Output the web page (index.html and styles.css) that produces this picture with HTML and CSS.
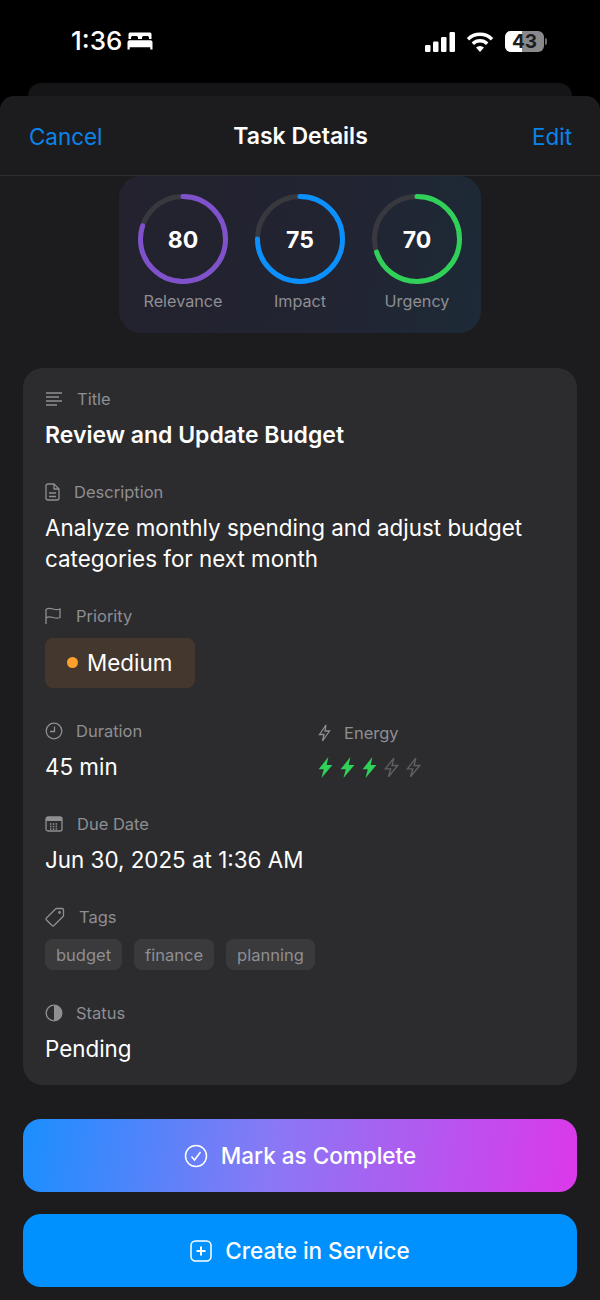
FILE: index.html
```html
<!DOCTYPE html>
<html lang="en">
<head>
  <meta charset="UTF-8" />
  <meta name="viewport" content="width=device-width, initial-scale=1.0"/>
  <title>Task Details</title>
  <link rel="stylesheet" href="styles.css">
</head>
<body>
  <div class="status-bar">
    <div class="status-left">
      <span class="clock">1:36</span>
      <svg width="26" height="20" viewBox="0 0 26 20" fill="#fff">
        <path d="M3 1.500h20a1.500 1.500 0 0 1 1.500 1.500v5H22V6.500a1.500 1.500 0 0 0-1.500-1.500h-4A1.500 1.500 0 0 0 15 6.500V8h-4V6.500A1.500 1.500 0 0 0 9.500 5h-4A1.500 1.500 0 0 0 4 6.500V8H1.500V3A1.500 1.500 0 0 1 3 1.500z"/>
        <path d="M2.500 9.200h21a2 2 0 0 1 2 2v7.300h-2.200v-2.300H2.700v2.300H.5v-7.300a2 2 0 0 1 2-2z"/>
      </svg>
    </div>
    <div class="status-right">
      <svg width="30" height="20" viewBox="0 0 30 20" fill="#fff">
        <rect x="0" y="13" width="5.500" height="7" rx="1.200"/>
        <rect x="8" y="9.500" width="5.500" height="10.500" rx="1.200"/>
        <rect x="16" y="5" width="5.500" height="15" rx="1.200"/>
        <rect x="24.500" y="0" width="5.500" height="20" rx="1.200"/>
      </svg>
      <svg width="28" height="20" viewBox="0 0 28 20" fill="none" stroke="#fff" stroke-width="3.400">
        <path d="M2 7.200a17 17 0 0 1 24 0"/>
        <path d="M6.800 11.800a10.200 10.200 0 0 1 14.400 0"/>
        <path d="M14 20l-4-4.400a5.600 5.600 0 0 1 8 0z" fill="#fff" stroke="none"/>
      </svg>
      <div class="battery">
        <div class="battery-body"><span class="battery-fill"></span><span class="battery-num">43</span></div>
        <span class="battery-cap"></span>
      </div>
    </div>
  </div>

  <div class="sheet-back"></div>
  <div class="sheet">
    <div class="nav">
      <span class="nav-link">Cancel</span>
      <span class="nav-title">Task Details</span>
      <span class="nav-link nav-edit">Edit</span>
    </div>

    <div class="scores">
      <div class="score">
        <div class="ring">
          <svg width="90" height="90" viewBox="0 0 90 90">
            <circle class="ring-track" cx="45" cy="45" r="42.500"/>
            <circle class="ring-value" cx="45" cy="45" r="42.500" stroke="#7f52cc" pathLength="100" stroke-dasharray="80 100"/>
          </svg>
          <span class="ring-num">80</span>
        </div>
        <span class="score-label">Relevance</span>
      </div>
      <div class="score">
        <div class="ring">
          <svg width="90" height="90" viewBox="0 0 90 90">
            <circle class="ring-track" cx="45" cy="45" r="42.500"/>
            <circle class="ring-value" cx="45" cy="45" r="42.500" stroke="#0a91ff" pathLength="100" stroke-dasharray="75 100"/>
          </svg>
          <span class="ring-num">75</span>
        </div>
        <span class="score-label">Impact</span>
      </div>
      <div class="score">
        <div class="ring">
          <svg width="90" height="90" viewBox="0 0 90 90">
            <circle class="ring-track" cx="45" cy="45" r="42.500"/>
            <circle class="ring-value" cx="45" cy="45" r="42.500" stroke="#2fd158" pathLength="100" stroke-dasharray="70 100"/>
          </svg>
          <span class="ring-num">70</span>
        </div>
        <span class="score-label">Urgency</span>
      </div>
    </div>

    <div class="details">
      <div class="field">
        <div class="field-label">
          <svg class="icon" width="18" height="16" viewBox="0 0 18 16">
            <path d="M1 2h16M1 6h13M1 10h16M1 14h11"/>
          </svg>
          <span class="gap-title">Title</span>
        </div>
        <div class="field-value title-value">Review and Update Budget</div>
      </div>

      <div class="field">
        <div class="field-label">
          <svg class="icon" width="15" height="18" viewBox="0 0 15 18">
            <path d="M9 1H3a2 2 0 0 0-2 2v12a2 2 0 0 0 2 2h9a2 2 0 0 0 2-2V6z"/>
            <path d="M9 1v5h5M4 10h7M4 13.500h7"/>
          </svg>
          <span class="gap-desc">Description</span>
        </div>
        <div class="field-value">Analyze monthly spending and adjust budget<br>categories for next month</div>
      </div>

      <div class="field">
        <div class="field-label">
          <svg class="icon" width="16" height="18" viewBox="0 0 16 18">
            <path d="M1 17V2.500C3 1 5 1 8 2s5 1 7 0v8.500c-2 1-4 1-7 0s-5-1-7 .5"/>
          </svg>
          <span class="gap-flag">Priority</span>
        </div>
        <div class="pill"><span class="pill-dot"></span>Medium</div>
      </div>

      <div class="field-row">
        <div class="field">
          <div class="field-label">
            <svg class="icon" width="18" height="18" viewBox="0 0 18 18">
              <circle cx="9" cy="9" r="7.800"/>
              <path d="M9.500 4.500v5H5"/>
            </svg>
            <span class="gap-status">Duration</span>
          </div>
          <div class="field-value">45 min</div>
        </div>
        <div class="field energy">
          <div class="field-label">
            <svg class="icon" width="13" height="18" viewBox="0 0 13 18">
              <path d="M8 1L1.500 10.500H6L4.500 17 11.500 7H7z"/>
            </svg>
            <span class="gap-energy">Energy</span>
          </div>
          <div class="bolts">
            <svg width="15" height="21" viewBox="0 0 13 18" fill="#2fd158"><path d="M9 0L.5 10.500H5L3 18 12.500 6.800H7.500z"/></svg>
            <svg width="15" height="21" viewBox="0 0 13 18" fill="#2fd158"><path d="M9 0L.5 10.500H5L3 18 12.500 6.800H7.500z"/></svg>
            <svg width="15" height="21" viewBox="0 0 13 18" fill="#2fd158"><path d="M9 0L.5 10.500H5L3 18 12.500 6.800H7.500z"/></svg>
            <svg width="15" height="21" viewBox="0 0 13 18" fill="none" stroke="#5f5f63" stroke-width="1.200"><path d="M8.500.9L1.200 10.200H5.800L3.900 17 11.800 7.300H7z"/></svg>
            <svg width="15" height="21" viewBox="0 0 13 18" fill="none" stroke="#5f5f63" stroke-width="1.200"><path d="M8.500.9L1.200 10.200H5.800L3.900 17 11.800 7.300H7z"/></svg>
          </div>
        </div>
      </div>

      <div class="field">
        <div class="field-label">
          <svg class="icon" width="18" height="16" viewBox="0 0 18 16">
            <rect x="1" y="1" width="16" height="14" rx="2"/>
            <path class="icon-fill" d="M1 2.500a1.500 1.500 0 0 1 1.500-1.500h13A1.500 1.500 0 0 1 17 2.500V5H1z"/>
            <path d="M5 8h8M5 10.500h8M5 13h8" stroke-dasharray="1.500 1.300"/>
          </svg>
          <span class="gap-title">Due Date</span>
        </div>
        <div class="field-value">Jun 30, 2025 at 1:36 AM</div>
      </div>

      <div class="field">
        <div class="field-label">
          <svg class="icon" width="20" height="20" viewBox="0 0 20 20">
            <path d="M1.500 11L10.500 2a1.500 1.500 0 0 1 1-.5H17a1.500 1.500 0 0 1 1.500 1.500v5.500a1.500 1.500 0 0 1-.5 1L9 18.500a1.500 1.500 0 0 1-2 0L1.500 13a1.500 1.500 0 0 1 0-2z"/>
            <circle cx="14.500" cy="5.500" r=".8"/>
          </svg>
          <span class="gap-tags">Tags</span>
        </div>
        <div class="chips">
          <span class="chip">budget</span>
          <span class="chip">finance</span>
          <span class="chip">planning</span>
        </div>
      </div>

      <div class="field">
        <div class="field-label">
          <svg class="icon" width="18" height="18" viewBox="0 0 18 18">
            <circle cx="9" cy="9" r="7.800"/>
            <path class="icon-fill" d="M9 1.200a7.800 7.800 0 0 1 0 15.600z"/>
          </svg>
          <span class="gap-status">Status</span>
        </div>
        <div class="field-value">Pending</div>
      </div>
    </div>

    <div class="actions">
      <button class="action action-complete" type="button">
        <svg width="24" height="24" viewBox="0 0 24 24" fill="none" stroke="#fff" stroke-width="1.500">
          <circle cx="12" cy="12" r="10.500"/>
          <path d="M7.500 12.500l3 3.500 6-8"/>
        </svg>
        Mark as Complete
      </button>
      <button class="action action-create" type="button">
        <svg width="22" height="24" viewBox="0 0 22 24" fill="none" stroke="#fff" stroke-width="1.500">
          <rect x="1" y="2" width="20" height="20" rx="4.500"/>
          <path d="M11 7.500v9M6.500 12h9" stroke-width="2"/>
        </svg>
        Create in Service
      </button>
    </div>
  </div>
</body>
</html>
```

FILE: styles.css
```css
* {
  box-sizing: border-box;
}
body {
  font-family: Inter, "Liberation Sans", sans-serif;
  background-color: #000;
  color: #fff;
  margin: 0;
  padding: 0;
}
.status-bar {
  height: 83px;
  display: flex;
  justify-content: space-between;
  align-items: flex-start;
  padding: 31px 53px 0 71px;
}
.status-left {
  display: flex;
  align-items: center;
  gap: 5px;
}
.clock {
  font-size: 26px;
  line-height: 20px;
  font-weight: 500;
}
.status-right {
  display: flex;
  align-items: center;
  gap: 11px;
}
.battery {
  display: flex;
  align-items: center;
  gap: 1px;
}
.battery-body {
  position: relative;
  width: 39px;
  height: 21px;
  border-radius: 6px;
  background-color: #8a8a8c;
  overflow: hidden;
  display: flex;
  align-items: center;
  justify-content: center;
}
.battery-fill {
  position: absolute;
  left: 0;
  top: 0;
  bottom: 0;
  width: 43%;
  background-color: #fff;
}
.battery-num {
  position: relative;
  font-size: 19px;
  font-weight: 700;
  color: #1c1c1e;
}
.battery-cap {
  width: 2px;
  height: 7px;
  border-radius: 0 2px 2px 0;
  background-color: #6f6f71;
}
.sheet-back {
  height: 13px;
  margin: 0 28px;
  background-color: #151517;
  border-radius: 14px 14px 0 0;
}
.sheet {
  height: 1204px;
  background-color: #1c1c1e;
  border-radius: 14px 14px 0 0;
  overflow: hidden;
}
.nav {
  height: 80px;
  display: grid;
  grid-template-columns: 1fr auto 1fr;
  align-items: center;
  padding: 1px 28px 0 29px;
  border-bottom: 1px solid #2f2f31;
  font-size: 22.4px;
}
.nav-link {
  color: #0a84e8;
}
.nav-edit {
  text-align: right;
}
.nav-title {
  font-size: 23px;
  font-weight: 600;
}
.scores {
  width: 362px;
  height: 157px;
  margin: 0 auto 35px;
  padding: 18px 19px 0;
  display: flex;
  gap: 27px;
  border-radius: 22px;
  background: linear-gradient(100deg, #23222e, #222432 60%, #1d2a37);
}
.score {
  width: 90px;
  display: flex;
  flex-direction: column;
  align-items: center;
  gap: 7px;
}
.ring {
  position: relative;
  width: 90px;
  height: 90px;
}
.ring svg {
  display: block;
  transform: rotate(-90deg);
}
.ring-track {
  fill: none;
  stroke: #38383f;
  stroke-width: 5;
}
.ring-value {
  fill: none;
  stroke-width: 5;
  stroke-linecap: round;
}
.ring-num {
  position: absolute;
  inset: 0;
  padding-top: 1px;
  display: flex;
  align-items: center;
  justify-content: center;
  font-size: 23px;
  font-weight: 700;
}
.score-label {
  font-size: 16.2px;
  line-height: 20px;
  color: #8e8e93;
  white-space: nowrap;
}
.details {
  margin: 0 23px;
  height: 717px;
  padding: 21px 22px 0;
  display: flex;
  flex-direction: column;
  gap: 31px;
  background-color: #2c2c2e;
  border-radius: 20px;
}
.field {
  display: flex;
  flex-direction: column;
  gap: 10px;
}
.field-row {
  display: flex;
}
.field-row > .field:first-child {
  flex: none;
  width: 273px;
}
.energy .field-label {
  margin-top: 2px;
}
.energy {
  gap: 13px;
}
.field-label {
  height: 20px;
  display: flex;
  align-items: center;
  font-size: 16.5px;
  line-height: 20px;
  color: #8e8e93;
}
.icon {
  flex: none;
  fill: none;
  stroke: #8e8e93;
  stroke-width: 1.300;
}
.icon-fill {
  fill: #8e8e93;
  stroke: none;
}
.gap-title {
  margin-left: 14px;
}
.gap-desc {
  margin-left: 14px;
}
.gap-flag {
  margin-left: 15px;
}
.gap-status {
  margin-left: 13px;
}
.gap-energy {
  margin-left: 13px;
}
.gap-tags {
  margin-left: 14px;
}
.field-value {
  padding-bottom: 1px;
  font-size: 22.4px;
  line-height: 31px;
}
.title-value {
  padding: 1px 0 0;
  font-size: 23px;
  font-weight: 600;
}
.pill {
  width: 150px;
  height: 50px;
  margin-top: 2px;
  margin-bottom: 2px;
  display: flex;
  align-items: center;
  padding: 0 0 1px 22px;
  gap: 9px;
  font-size: 22.4px;
  background-color: #43372e;
  border-radius: 8px;
}
.pill-dot {
  width: 11px;
  height: 11px;
  border-radius: 50%;
  background-color: #ff9f2e;
}
.bolts {
  display: flex;
  gap: 7px;
  height: 22px;
  align-items: center;
}
.chips {
  display: flex;
  gap: 12px;
  margin-top: 2px;
  margin-bottom: 2px;
}
.chip {
  height: 31px;
  padding: 0 11px;
  display: flex;
  align-items: center;
  font-size: 16.5px;
  color: #8e8e93;
  background-color: #3a3a3c;
  border-radius: 8px;
}
.actions {
  margin: 34px 23px 0;
  display: flex;
  flex-direction: column;
  gap: 22px;
}
.action {
  height: 73px;
  display: flex;
  align-items: center;
  justify-content: center;
  gap: 13px;
  border: none;
  border-radius: 18px;
  color: #fff;
  font-family: inherit;
  font-size: 22.5px;
  font-weight: 500;
}
.action-complete {
  background: linear-gradient(97deg, #1a8fff, #8a78f5 45%, #dc38ea);
}
.action-create {
  background-color: #0091ff;
}
```
